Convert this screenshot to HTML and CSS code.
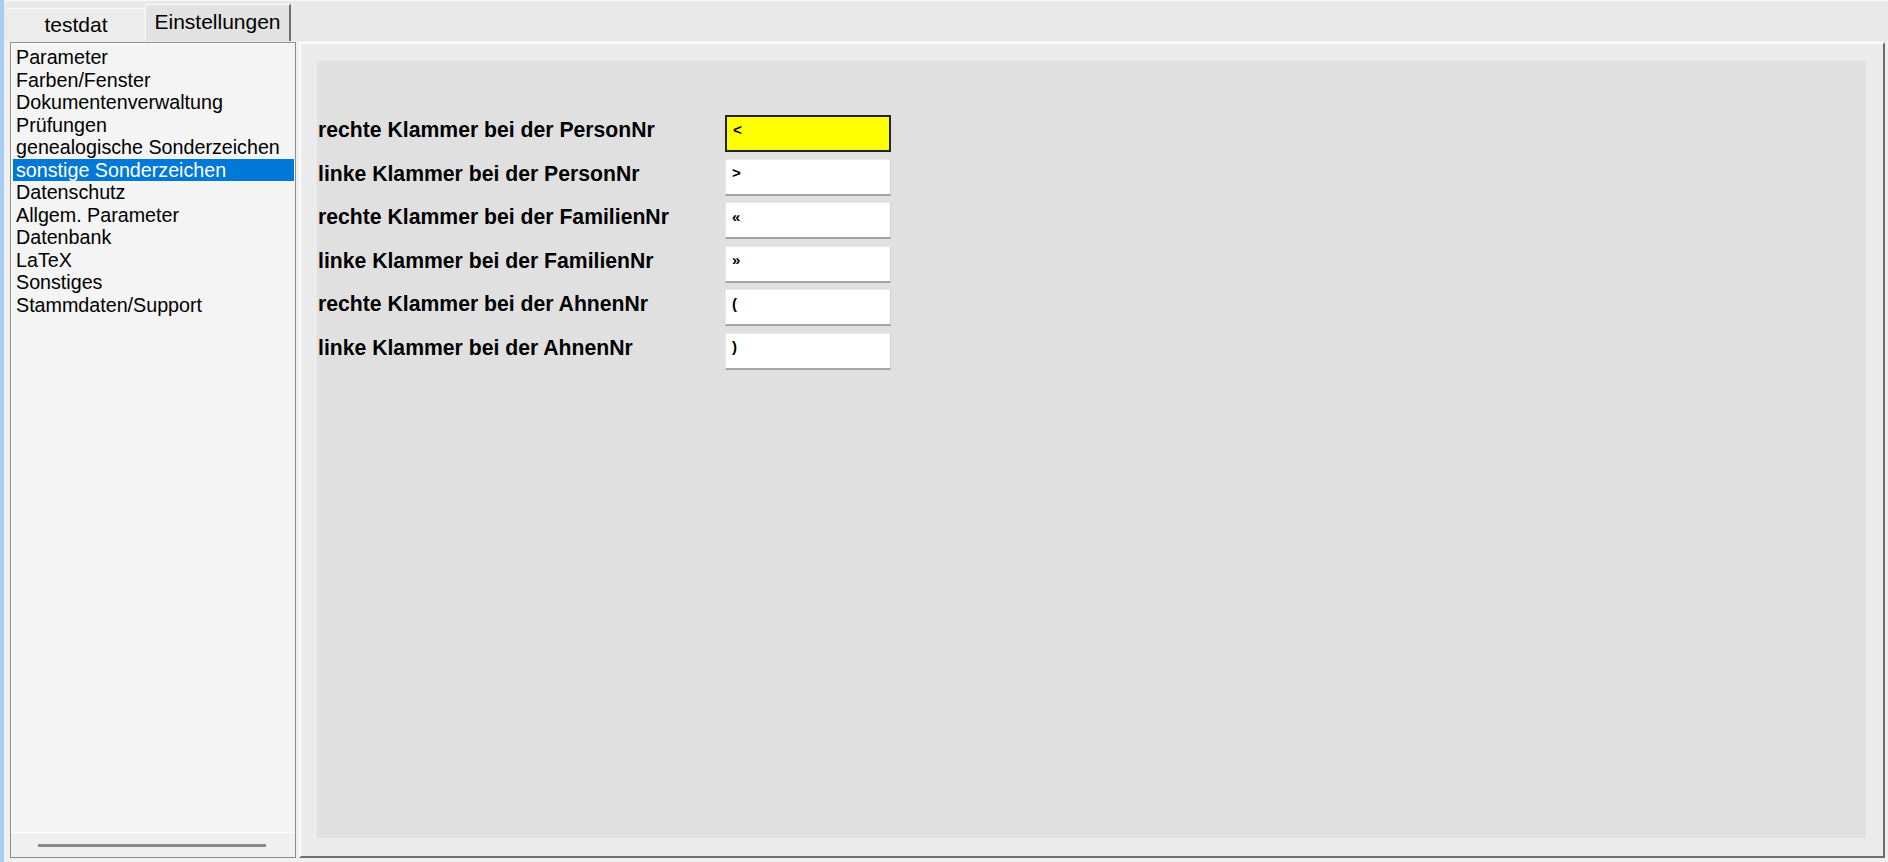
FILE: index.html
```html
<!DOCTYPE html>
<html lang="de">
<head>
    <meta charset="UTF-8">
    <title>Einstellungen</title>
    <link rel="stylesheet" href="styles.css">
</head>
<body>
    <div class="app">
        <div class="edge"></div>
        <div class="window">
            <div class="tabs">
                <div class="tab">testdat</div>
                <div class="tab active">Einstellungen</div>
            </div>

            <div class="main">
                <div class="list">
                    <ul class="items">
                        <li>Parameter</li>
                        <li>Farben/Fenster</li>
                        <li>Dokumentenverwaltung</li>
                        <li>Prüfungen</li>
                        <li>genealogische Sonderzeichen</li>
                        <li class="selected">sonstige Sonderzeichen</li>
                        <li>Datenschutz</li>
                        <li>Allgem. Parameter</li>
                        <li>Datenbank</li>
                        <li>LaTeX</li>
                        <li>Sonstiges</li>
                        <li>Stammdaten/Support</li>
                    </ul>
                    <div class="hscroll"><div class="thumb"></div></div>
                </div>

                <div class="panel">
                    <div class="content">
                        <div class="form">
                            <label for="f1">rechte Klammer bei der PersonNr</label>
                            <input id="f1" class="field focus" value="&lt;">
                            <label for="f2">linke Klammer bei der PersonNr</label>
                            <input id="f2" class="field" value="&gt;">
                            <label for="f3">rechte Klammer bei der FamilienNr</label>
                            <input id="f3" class="field" value="«">
                            <label for="f4">linke Klammer bei der FamilienNr</label>
                            <input id="f4" class="field" value="»">
                            <label for="f5">rechte Klammer bei der AhnenNr</label>
                            <input id="f5" class="field" value="(">
                            <label for="f6">linke Klammer bei der AhnenNr</label>
                            <input id="f6" class="field" value=")">
                        </div>
                    </div>
                </div>
            </div>
        </div>
    </div>
</body>
</html>
```

FILE: styles.css
```css
body {
    margin: 0;
    background-color: #f0f0f0;
    font-family: "Liberation Sans", Arial, sans-serif;
    color: #000;
}

.app {
    display: flex;
    height: 862px;
}

.edge {
    width: 4px;
    background-color: #a9cdf1;
}

.window {
    flex: 1;
    display: flex;
    flex-direction: column;
}

/* Reiter oben */
.tabs {
    height: 41px;
    display: flex;
    align-items: flex-end;
    padding-left: 3px;
    background-color: #e9e9e9;
    border-top: 1px solid #f6f6f6;
    box-sizing: border-box;
}

.tab {
    width: 138px;
    height: 33px;
    font-size: 21px;
    line-height: 32px;
    text-align: center;
    background-color: #ececec;
    border-top: 1px solid #fafafa;
    box-sizing: border-box;
}

.tab.active {
    width: 146px;
    height: 37px;
    line-height: 34px;
    background-color: #e2e2e2;
    border-left: 1px solid #fafafa;
    border-right: 2px solid #6f6f6f;
}

.main {
    flex: 1;
    display: flex;
    gap: 3px;
    padding: 1px 3px 4px 6px;
}

/* Liste links */
.list {
    width: 286px;
    display: flex;
    flex-direction: column;
    background-color: #f4f4f4;
    border: 1px solid #8c8c8c;
    box-shadow: inset 1px 1px 0 #fdfdfd;
    box-sizing: border-box;
}

.items {
    list-style: none;
    margin: 0;
    padding: 3px 1px 0 2px;
}

.items li {
    font-size: 19.7px;
    line-height: 22.5px;
    padding-left: 3px;
    white-space: nowrap;
}

.items li.selected {
    background-color: #0078d7;
    color: #fff;
}

.hscroll {
    margin-top: auto;
    height: 25px;
    border-top: 1px solid #fdfdfd;
    background-color: #f0f0f0;
    padding: 11px 0 0 27px;
    box-sizing: border-box;
}

.thumb {
    width: 228px;
    height: 3px;
    background-color: #8a8a8a;
}

/* Einstellungsbereich */
.panel {
    flex: 1;
    display: flex;
    padding: 17px 17px 18px 16px;
    background-color: #ebebeb;
    border-top: 2px solid #fbfbfb;
    border-left: 2px solid #fbfbfb;
    border-right: 2px solid #6d6d6d;
    border-bottom: 2px solid #6d6d6d;
}

.content {
    flex: 1;
    background-color: #e0e0e0;
}

.form {
    display: grid;
    grid-template-columns: 407px 166px;
    grid-auto-rows: 36px;
    row-gap: 7.5px;
    padding: 54px 0 0 1px;
}

.form label {
    align-self: center;
    font-size: 21.2px;
    font-weight: bold;
    padding-bottom: 6px;
    white-space: nowrap;
}

.field {
    width: 166px;
    height: 37px;
    margin: 0;
    padding: 0 6px 8px;
    font-family: "Liberation Sans", Arial, sans-serif;
    font-size: 15px;
    font-weight: bold;
    color: #000;
    background-color: #fff;
    border: 1px solid #e8e8e8;
    border-right-color: #cfcfcf;
    border-bottom: 2px solid #a4a4a4;
    box-sizing: border-box;
    outline: none;
}

.field.focus {
    background-color: #ffff00;
    border: 2px solid #222;
}
```
